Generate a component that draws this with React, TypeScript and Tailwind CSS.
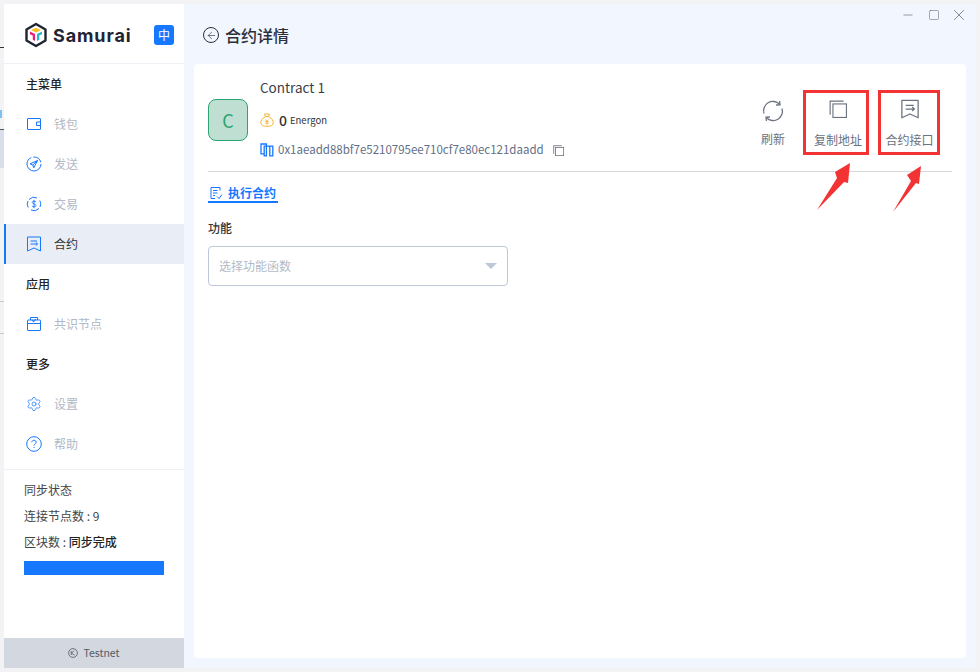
import { ArrowLeft, Minus, Settings, Square, X } from "lucide-react";
import type { ReactNode } from "react";

const font = "font-['Noto_Sans_CJK_SC','Noto_Sans',sans-serif]";

function Logo() {
  return (
    <svg width="24" height="26" viewBox="0 0 24 26" fill="none">
      <path d="M12 2 L21.5 7.5 V18.5 L12 24 L2.5 18.5 V7.5 Z" stroke="#1f2433" strokeWidth="2.4" strokeLinejoin="round" />
      <path d="M7 8 L12 5.8 L17 8 L12 10.5 Z" fill="#fbbf24" />
      <path d="M6 9.5 L11 12 V19 L8.8 17.8 V13.6 L6 12.2 Z" fill="#ec1c7c" />
      <path d="M18 9.5 L13 12 V19 L15.2 17.8 V13.6 L18 12.2 Z" fill="#22b8d6" />
    </svg>
  );
}

function WalletIcon() {
  return (
    <svg width="16" height="16" viewBox="0 0 16 16" fill="none" stroke="#1677ff" strokeWidth="1">
      <rect x="1.5" y="2.5" width="13" height="11" rx="0.5" />
      <path d="M14.5 6 H10.5 V9.5 H14.5" />
    </svg>
  );
}

function SendIcon() {
  return (
    <svg width="16" height="16" viewBox="0 0 16 16" fill="none" stroke="#1677ff" strokeWidth="1">
      <circle cx="8" cy="8" r="7" strokeDasharray="30 2 10 2" />
      <path d="M11.5 4.5 L4 7.8 L6.8 9 L7.8 11.8 Z M11.5 4.5 L6.8 9" strokeLinejoin="round" />
    </svg>
  );
}

function TradeIcon() {
  return (
    <svg width="16" height="16" viewBox="0 0 16 16" fill="none" stroke="#1677ff" strokeWidth="1">
      <path d="M3 3.5 A6.8 6.8 0 0 1 11 2 M13 12.5 A6.8 6.8 0 0 1 5 14 M2.2 11.5 A6.8 6.8 0 0 1 2 5 M13.8 4.5 A6.8 6.8 0 0 1 14 11" />
      <path d="M10 6 C9.5 4.8 6.2 4.8 6.2 6.4 C6.2 8.2 10 7.6 10 9.5 C10 11.2 6.5 11.2 6 10 M8 3.8 V12.2" strokeWidth="0.9" />
    </svg>
  );
}

function BookmarkIcon({ size = 16, color = "#1677ff", width = 1 }: { size?: number; color?: string; width?: number }) {
  return (
    <svg width={size} height={size} viewBox="0 0 16 16" fill="none" stroke={color} strokeWidth={width}>
      <path d="M1.5 1 H14.5 V15 L8 12 L1.5 15 Z" strokeLinejoin="round" />
      <path d="M4.5 5 H11 M4.5 8 H11.5 M9.8 6.4 L11.5 8 L9.8 9.6" />
    </svg>
  );
}

function NodeIcon() {
  return (
    <svg width="16" height="16" viewBox="0 0 16 16" fill="none" stroke="#1677ff" strokeWidth="1">
      <rect x="1.5" y="4" width="13" height="10.5" rx="0.5" />
      <path d="M1.5 7.5 H14.5" />
      <path d="M4.5 4 V1.5 H11.5 V4" />
      <path d="M6 4.2 L7.6 5.6 L10 3" strokeWidth="1.1" />
    </svg>
  );
}

function HelpIcon() {
  return (
    <svg width="16" height="16" viewBox="0 0 16 16" fill="none" stroke="#1677ff" strokeWidth="1">
      <circle cx="8" cy="8" r="7.3" />
      <path d="M5.8 6.2 C5.8 3.6 10.2 3.6 10.2 6.2 C10.2 7.8 8 7.9 8 9.6" />
      <path d="M8 11 V12" />
    </svg>
  );
}

function CopyIcon({ size, color, width }: { size: number; color: string; width: number }) {
  return (
    <svg width={size} height={size} viewBox="0 0 16 16" fill="none" stroke={color} strokeWidth={width}>
      <path d="M1 13 V1 H13" />
      <rect x="3.5" y="3.5" width="12" height="12" />
    </svg>
  );
}

function RefreshIcon() {
  return (
    <svg width="22" height="22" viewBox="0 0 22 22" fill="none" stroke="#6b7280" strokeWidth="1.3">
      <path d="M2 13.5 A9.3 9.3 0 0 1 17.5 4.2" />
      <path d="M20 8.5 A9.3 9.3 0 0 1 4.5 17.8" />
      <path d="M14 5 L18 4.8 L17.6 1" />
      <path d="M8 17 L4 17.2 L4.4 21" />
    </svg>
  );
}

function MoneyBag() {
  return (
    <svg width="14" height="14" viewBox="0 0 14 14" fill="none" stroke="#f5b335" strokeWidth="1">
      <path d="M4.6 1 H9.4 L8.6 3.6 H5.4 Z" strokeLinejoin="round" />
      <path d="M5.2 3.8 C1.8 5.4 0.6 8 0.8 10 C1 12.4 3 13.3 7 13.3 C11 13.3 13 12.4 13.2 10 C13.4 8 12.2 5.4 8.8 3.8" />
      <path d="M5.4 6.4 L7 8 L8.6 6.4 M5.2 8.6 H8.8 M5.2 10.2 H8.8 M7 8 V11.6" strokeWidth="0.8" />
    </svg>
  );
}

function AddressIcon() {
  return (
    <svg width="14" height="14" viewBox="0 0 14 14" fill="none" stroke="#1677ff" strokeWidth="1.3">
      <path d="M4.2 10.8 H1 V1 H6.4 V12.8 H4.2 V3.2 H9.8 V12.8 H12.8 V3.2 H9.8" />
    </svg>
  );
}

function ExecIcon() {
  return (
    <svg width="14" height="14" viewBox="0 0 14 14" fill="none" stroke="#1677ff" strokeWidth="1">
      <path d="M11 4.5 V1.5 H2 V12.5 H6" />
      <path d="M4 4.5 H8.5 M4 7 H8.5 M4 9.5 H6" />
      <path d="M8 10.5 L10 12.5 L13 8.5" />
    </svg>
  );
}

function TestnetIcon() {
  return (
    <svg width="10" height="10" viewBox="0 0 10 10" fill="none" stroke="#555b66" strokeWidth="0.8">
      <circle cx="5" cy="5" r="4.4" />
      <path d="M3.2 3 V7 M3.4 5 L6.2 2.8 M3.4 5 L6.6 7.2" />
    </svg>
  );
}

function NavItem({ icon, label, active }: { icon: ReactNode; label: string; active?: boolean }) {
  return (
    <div className={`flex h-10 items-center gap-3 text-xs ${active ? "border-l-2 border-[#1677ff] bg-[#e9eef6] pl-5 text-[#333]" : "pl-[22px] text-[#b1b8c6]"}`}>
      <span className="flex w-4 justify-center">{icon}</span>
      <span>{label}</span>
    </div>
  );
}

function SectionTitle({ children }: { children: ReactNode }) {
  return <div className="flex h-10 items-center pl-[22px] text-xs font-medium text-[#222]">{children}</div>;
}

function Sidebar() {
  return (
    <aside className="flex w-[180px] shrink-0 flex-col bg-white">
      <div className="flex h-[60px] items-center border-b border-[#edf0f5] pl-5 pr-[10px] pt-[2px]">
        <Logo />
        <span className="ml-[5px] mt-[1px] font-['Inter',sans-serif] text-[18px] font-bold tracking-[0.9px] text-[#1f2433]">Samurai</span>
        <span className="ml-auto mt-[1px] flex h-5 w-5 items-center justify-center rounded-[3px] bg-[#1677ff] text-xs text-white">中</span>
      </div>
      <SectionTitle>主菜单</SectionTitle>
      <NavItem icon={<WalletIcon />} label="钱包" />
      <NavItem icon={<SendIcon />} label="发送" />
      <NavItem icon={<TradeIcon />} label="交易" />
      <NavItem icon={<BookmarkIcon />} label="合约" active />
      <SectionTitle>应用</SectionTitle>
      <NavItem icon={<NodeIcon />} label="共识节点" />
      <SectionTitle>更多</SectionTitle>
      <NavItem icon={<Settings size={18} strokeWidth={1.1} color="#1677ff" />} label="设置" />
      <NavItem icon={<HelpIcon />} label="帮助" />
      <div className="mt-[5px] border-t border-[#edf0f5] px-5 pt-[11px] text-xs text-[#444]">
        <div className="h-[26px] leading-[18px]">同步状态</div>
        <div className="h-[26px] leading-[18px]">连接节点数 : 9</div>
        <div className="h-[26px] leading-[18px]">
          区块数 : <span className="font-medium text-[#222]">同步完成</span>
        </div>
        <div className="mt-[2px] h-[14px] w-[140px] bg-[#1677ff]" />
      </div>
      <div className="mt-auto flex h-[30px] items-center justify-center gap-[5px] bg-[#d3d7e0] text-[10.5px] text-[#555b66]">
        <TestnetIcon />
        <span>Testnet</span>
      </div>
    </aside>
  );
}

function ActionButton({ icon, label }: { icon: ReactNode; label: string }) {
  return (
    <div className="flex h-[65px] flex-col items-center pt-[9px] text-xs text-[#6b7280]">
      <div className="flex h-[24px] items-center justify-center">{icon}</div>
      <div className="mt-2">{label}</div>
    </div>
  );
}

function MarkedButton({ icon, label, shift }: { icon: ReactNode; label: string; shift: string }) {
  return (
    <div className={`flex h-[65px] flex-col items-center border-[3px] border-[#f33333] pt-1 text-xs text-[#6b7280] ${shift}`}>
      <div className="flex h-[24px] items-center justify-center">{icon}</div>
      <div className="mt-[11px]">{label}</div>
    </div>
  );
}

export default function App() {
  return (
    <div className={`relative flex h-[672px] w-[980px] overflow-hidden bg-[#f3f3f6] py-1 pr-1 ${font}`}>
      {/* bit of the window behind */}
      <div className="flex w-1 shrink-0 flex-col overflow-hidden text-xs leading-none text-[#555]">
        <div className="h-[26px] shrink-0" />
        <div className="h-[18px] w-1 shrink-0 overflow-hidden border-b border-[#333]">
          <span className="block w-4 -translate-x-3">登</span>
        </div>
        <div className="h-[62px] shrink-0" />
        <div className="h-2 w-[2px] shrink-0 bg-[#7cc0f5]" />
        <div className="h-[11px] shrink-0" />
        <div className="h-[39px] shrink-0 border-t border-[#555] bg-[#d9deea]" />
        <div className="h-[22px] shrink-0" />
        <div className="h-3 w-1 shrink-0 overflow-hidden"><span className="block w-4 -translate-x-3">确</span></div>
        <div className="h-4 shrink-0" />
        <div className="h-[10px] w-1 shrink-0 overflow-hidden"><span className="block w-4 -translate-x-2">6</span></div>
        <div className="h-4 shrink-0" />
        <div className="h-2 w-1 shrink-0 overflow-hidden"><span className="block w-4 -translate-x-2 -translate-y-[2px]">o</span></div>
        <div className="h-[49px] shrink-0" />
        <div className="h-px shrink-0 bg-[#ccc]" />
        <div className="h-[31px] shrink-0" />
        <div className="h-px shrink-0 bg-[#ccc]" />
      </div>

      <Sidebar />

      <main className="flex min-w-0 flex-1 flex-col bg-[#f2f6fe] px-[10px] pb-[10px]">
        <div className="flex h-[60px] shrink-0 flex-col">
          <div className="mr-[-5px] flex h-[22px] items-center justify-end text-[#5f6470]">
            <span className="flex w-[26px] justify-center"><Minus size={14} strokeWidth={1.1} /></span>
            <span className="flex w-[25px] justify-center"><Square size={12} strokeWidth={1.1} /></span>
            <span className="flex w-[25px] justify-center"><X size={18} strokeWidth={1} /></span>
          </div>
          <div className="-mt-[2px] flex items-center gap-[6px] pl-[9px] text-base font-medium leading-[22px] text-[#2c2f3a]">
            <span className="flex h-[16px] w-[16px] items-center justify-center rounded-full border border-[#2c2f3a]">
              <ArrowLeft size={11} strokeWidth={1.4} />
            </span>
            <span>合约详情</span>
          </div>
        </div>

        <section className="flex-1 rounded bg-white px-[14px]">
          <div className="flex h-[108px] items-start border-b border-[#d5d8dd]">
            <div className="mt-[35px] flex h-[42px] w-10 items-center justify-center rounded-lg border border-[#2ba471] bg-[#bfdfd3] text-lg text-[#2ba471]">C</div>
            <div className="ml-3 flex flex-col">
              <div className="mt-[13px] h-[20px] text-[13.5px] leading-[20px] text-[#3a3d45]">Contract 1</div>
              <div className="mt-[13px] flex h-[20px] items-center text-[#333]">
                <MoneyBag />
                <span className="ml-[5px] text-sm font-medium">0</span>
                <span className="ml-[3px] mt-[1px] text-[9.5px]">Energon</span>
              </div>
              <div className="mt-[10px] flex h-[20px] items-center text-[11.5px] text-[#5f6f87]">
                <AddressIcon />
                <span className="ml-[4px]">0x1aeadd88bf7e5210795ee710cf7e80ec121daadd</span>
                <span className="ml-[9px]"><CopyIcon size={11} color="#6b7280" width={1.2} /></span>
              </div>
            </div>
            <div className="ml-auto mr-[12px] mt-[26px] flex items-start">
              <div className="w-[60px]">
                <ActionButton icon={<RefreshIcon />} label="刷新" />
              </div>
              <div className="w-[66px]">
                <MarkedButton icon={<CopyIcon size={18} color="#6b7280" width={1} />} label="复制地址" shift="pl-1" />
              </div>
              <div className="ml-[9px] w-[62px]">
                <MarkedButton icon={<BookmarkIcon size={20} color="#6b7280" width={1} />} label="合约接口" shift="pl-[1px]" />
              </div>
            </div>
          </div>

          <div className="mt-[13px] flex w-[70px] items-center gap-[5px] border-b-2 border-[#1677ff] pl-[1px] text-xs font-bold leading-[16px] text-[#1677ff]">
            <ExecIcon />
            <span>执行合约</span>
          </div>
          <div className="mt-[17px] text-xs font-medium leading-[16px] text-[#333]">功能</div>
          <div className="mt-[10px] flex h-10 w-[300px] items-center justify-between rounded border border-[#bcc8d8] px-[10px] text-xs text-[#b3bac6]">
            <span>选择功能函数</span>
            <span className="h-0 w-0 border-x-[6px] border-t-[6px] border-x-transparent border-t-[#bcc8d8]" />
          </div>
        </section>
      </main>

      {/* red arrows pasted on the screenshot */}
      <svg className="absolute left-[810px] top-[160px]" width="120" height="56" viewBox="0 0 120 56" fill="#f33333">
        <path d="M7 50 L27 18 L25 12 L40 3 L38 23 L34 22 Z" />
        <path d="M83 52 L101 21 L97 15 L111 6 L109 24 L106 23 Z" />
      </svg>
    </div>
  );
}
